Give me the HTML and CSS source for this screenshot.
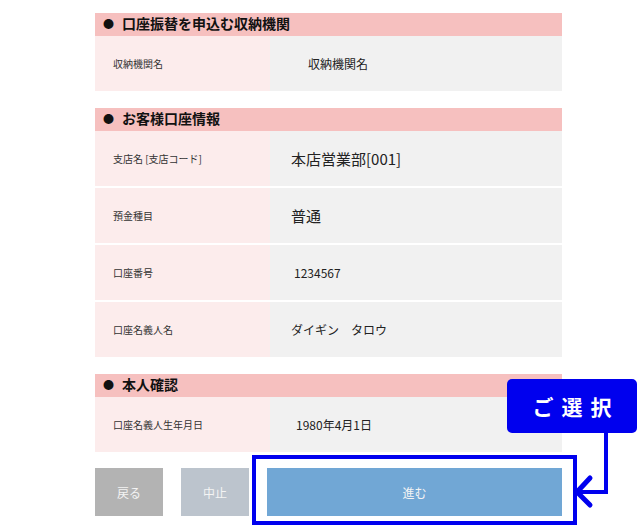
FILE: index.html
```html
<!DOCTYPE html>
<html lang="ja">
<head>
    <meta charset="UTF-8">
    <meta name="viewport" content="width=device-width, initial-scale=1.0">
    <title>口座振替 確認</title>
    <link rel="stylesheet" href="styles.css">
</head>
<body>
    <div class="page">
        <!-- 収納機関 -->
        <section class="block">
            <h2 class="block-title"><span class="dot">●</span>口座振替を申込む収納機関</h2>
            <div class="row">
                <div class="label">収納機関名</div>
                <div class="value value-org">収納機関名</div>
            </div>
        </section>

        <!-- お客様口座情報 -->
        <section class="block">
            <h2 class="block-title"><span class="dot">●</span>お客様口座情報</h2>
            <div class="row">
                <div class="label">支店名 [支店コード]</div>
                <div class="value value-large">本店営業部[001]</div>
            </div>
            <div class="row">
                <div class="label">預金種目</div>
                <div class="value value-large">普通</div>
            </div>
            <div class="row">
                <div class="label">口座番号</div>
                <div class="value value-num">1234567</div>
            </div>
            <div class="row">
                <div class="label">口座名義人名</div>
                <div class="value">ダイギン　タロウ</div>
            </div>
        </section>

        <!-- 本人確認 -->
        <section class="block">
            <h2 class="block-title"><span class="dot">●</span>本人確認</h2>
            <div class="row">
                <div class="label">口座名義人生年月日</div>
                <div class="value value-date">1980年4月1日</div>
            </div>
        </section>

        <div class="actions">
            <button type="button" class="btn btn-back">戻る</button>
            <button type="button" class="btn btn-cancel">中止</button>
            <button type="button" class="btn btn-next">進む</button>
        </div>
    </div>

    <!-- 注記（ご選択） -->
    <div class="focus-box"></div>
    <div class="badge">ご選択</div>
    <svg class="pointer" width="70" height="80" viewBox="0 0 70 80">
        <polyline points="36,0 36,59 8,59" fill="none" stroke="#0000ee" stroke-width="4"/>
        <polyline points="20,45 7,59 20,72" fill="none" stroke="#0000ee" stroke-width="5" stroke-linecap="round" stroke-linejoin="round"/>
    </svg>
</body>
</html>
```

FILE: styles.css
```css
body {
    font-family: "Noto Sans CJK JP", "Noto Sans", sans-serif;
    margin: 0;
    padding: 0;
    background-color: #fff;
    color: #222;
}
.page {
    width: 467px;
    margin-left: 95px;
    padding-top: 13px;
}
.block {
    margin-bottom: 17px;
}
.block-title {
    margin: 0;
    height: 23px;
    line-height: 20px;
    padding-left: 8px;
    font-size: 14px;
    font-weight: bold;
    color: #111;
    background-color: #f6c0bf;
}
.block-title .dot {
    font-size: 11px;
    margin-right: 8px;
    vertical-align: 1px;
}
.row {
    display: flex;
    height: 55px;
}
.row + .row {
    border-top: 2px solid #fff;
}
.label {
    width: 157px;
    padding-left: 18px;
    display: flex;
    align-items: center;
    font-size: 10px;
    color: #333;
    background-color: #fcecec;
}
.value {
    flex: 1;
    padding-left: 21px;
    display: flex;
    align-items: center;
    font-size: 12px;
    color: #222;
    background-color: #f1f1f1;
}
.value-org {
    padding-left: 38px;
}
.value-large {
    font-size: 15px;
}
.value-num {
    padding-left: 24px;
}
.value-date {
    padding-left: 26px;
}
.actions {
    display: flex;
    gap: 18px;
    margin-top: -1px;
}
.btn {
    height: 48px;
    width: 68px;
    border: none;
    padding: 0;
    font-family: inherit;
    font-size: 12px;
    color: #f4f4f4;
    cursor: pointer;
}
.btn-back {
    background-color: #b3b3b3;
}
.btn-cancel {
    background-color: #bcc4cd;
}
.btn-next {
    flex: 1;
    background-color: #71a7d5;
}
/* callout overlay */
.focus-box {
    position: absolute;
    left: 252px;
    top: 455px;
    width: 317px;
    height: 62px;
    border: 4px solid #0000ee;
}
.badge {
    position: absolute;
    left: 507px;
    top: 379px;
    width: 130px;
    height: 54px;
    border-radius: 5px;
    background-color: #0000ee;
    color: #fff;
    font-size: 21px;
    font-weight: bold;
    letter-spacing: 8px;
    text-indent: 8px;
    display: flex;
    align-items: center;
    justify-content: center;
}
.pointer {
    position: absolute;
    left: 570px;
    top: 433px;
    width: 70px;
    height: 80px;
}
```
